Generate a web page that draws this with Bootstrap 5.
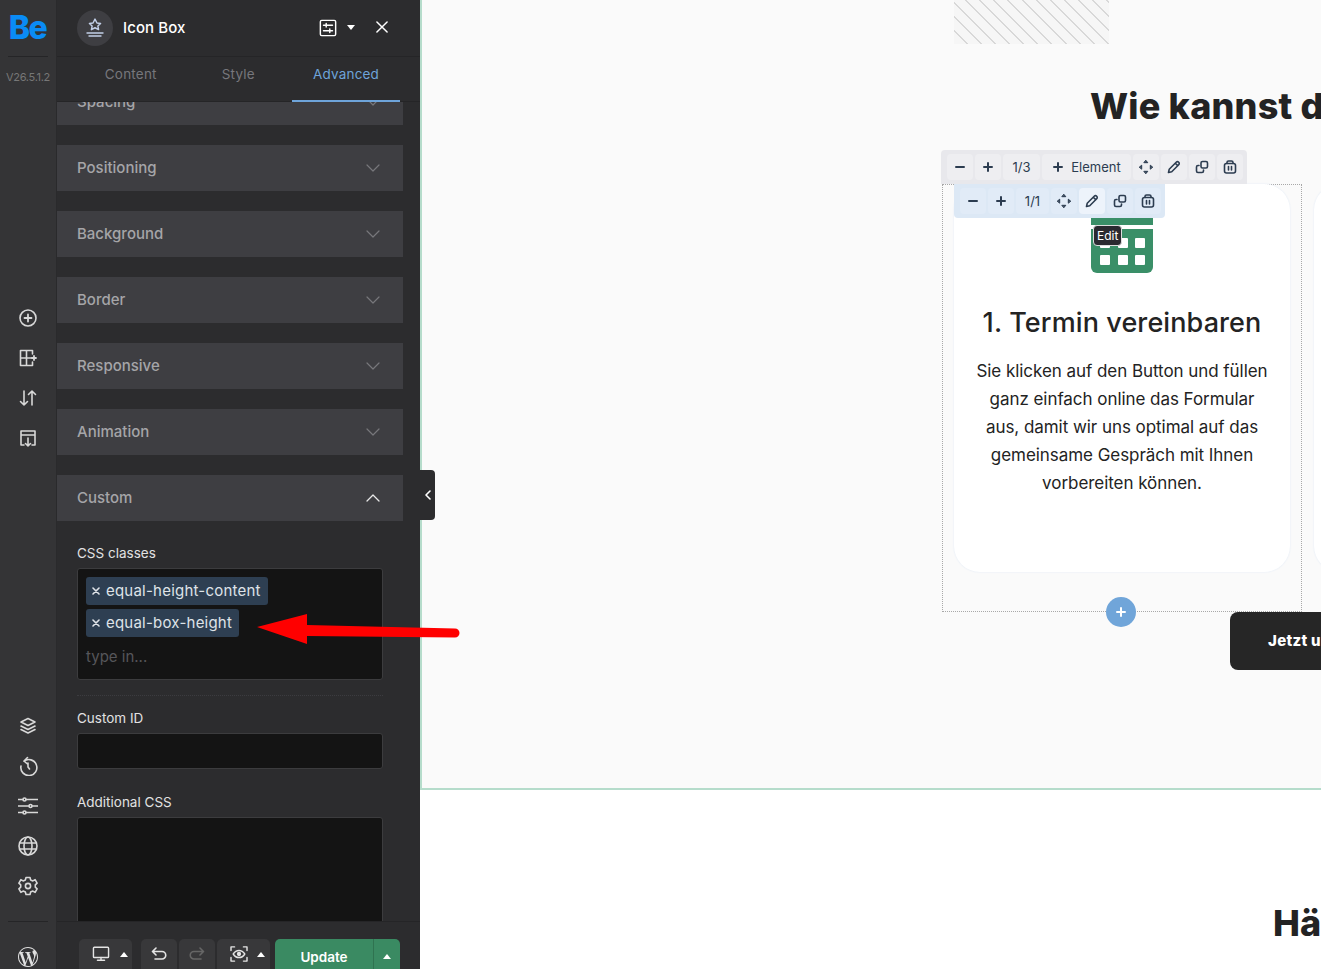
<!DOCTYPE html>
<html lang="de">
<head>
  <meta charset="UTF-8">
  <meta name="viewport" content="width=device-width, initial-scale=1">
  <title>Icon Box</title>
  <link href="https://cdn.jsdelivr.net/npm/bootstrap@5.3.3/dist/css/bootstrap.min.css" rel="stylesheet">
  <style>
    html, body { height: 100%; margin: 0; overflow: hidden; background: #fff; font-family: Inter, "Liberation Sans", sans-serif; }
    svg.ico { fill: none; stroke: currentColor; stroke-width: 1.6; stroke-linecap: round; stroke-linejoin: round; display: block; }

    .app-wrap { height: 969px; position: relative; }

    /* left rail */
    .rail { width: 57px; height: 969px; background: #343436; border-right: 1px solid #2a2a2c; color: #d8d8d8; overflow: hidden; }
    .rail-logo { height: 57px; width: 40px; margin: 0 auto; flex: none; border-bottom: 1px solid #252527; color: #0a8bf5; font-size: 32px; font-weight: 800; line-height: 55px; letter-spacing: -1.5px; text-align: center; text-indent: -1px; }
    .rail-ver { font-size: 11px; color: #777; line-height: 12px; margin-top: 14px; letter-spacing: -.3px; text-align: center; flex: none; }
    .rail-group { margin-top: 215px; flex: none; }
    .rail-group.lower { margin-top: 248px; border-bottom: 1px solid #252527; padding-bottom: 15px; width: 40px; align-self: center; }
    .rail-btn { height: 40px; display: flex; align-items: center; justify-content: center; }
    .rail-wp { height: 40px; margin-top: 15px; flex: none; display: flex; align-items: center; justify-content: center; color: #e0e0e0; }

    /* settings panel */
    .panel { width: 363px; height: 969px; background: #2c2c2e; color: #fff; }
    .panel-head { height: 57px; border-bottom: 1px solid #252527; padding-left: 20px; padding-right: 32px; padding-bottom: 1px; }
    .head-circle { width: 36px; height: 36px; border-radius: 50%; background: #3e3e42; color: #c2cfe8; }
    .head-title { font-size: 15px; font-weight: 500; margin: 1px 0 0 10px; letter-spacing: .1px; }
    .caret-up, .caret-down { width: 0; height: 0; border-left: 4px solid transparent; border-right: 4px solid transparent; }
    .caret-down { border-top: 5px solid #fff; margin-left: 10px; }
    .caret-up { border-bottom: 5px solid #fff; }
    .head-close { margin: 0 0 1px 21px; }
    .panel-tabs { height: 45px; padding-left: 20px; border-bottom: 1px solid #252527; position: relative; z-index: 2; background: #2c2c2e; }
    .tab-item { width: 107.5px; height: 44px; line-height: 35px; text-align: center; font-size: 13.5px; color: #77777c; letter-spacing: .2px; }
    .tab-item.on { width: 108px; color: #6ea4da; border-bottom: 2px solid #6ea4da; height: 45px; }
    .panel-scroll { height: 819px; overflow: hidden; padding-right: 17px; }
    .acc-row { height: 46px; background: #3e3e42; color: #a5a5a8; font-size: 15px; font-weight: 500; padding: 1px 23px 0 20px; margin-top: 20px; }
    .acc-row:first-child { margin-top: -23px; }
    .acc-row svg { color: #77777b; margin-bottom: 1px; }
    .acc-row svg.open { color: #e8e8e8; }
    .field-wrap { padding: 23px 20px 0 20px; }
    .field-label { font-size: 13.5px; line-height: 18px; color: #e2e2e2; margin-bottom: 6px; }
    .tag-box { height: 112px; background: #141414; border: 1px solid #3c3c3e; border-radius: 3px; padding: 8px; }
    .tag-chip { height: 28px; background: #2e3f52; border-radius: 3px; color: #dfe3e8; font-size: 15px; letter-spacing: .22px; padding: 0 7px 0 6px; margin-bottom: 4px; width: fit-content; white-space: nowrap; }
    .tag-chip svg { margin-right: 6px; }
    .tag-hint { font-size: 15px; color: #56565a; margin-top: 9px; }
    .field-sep { height: 16px; margin-bottom: 13px; border-bottom: 1px dotted #3c3c40; }
    .field-gap { height: 24px; }
    .field-input { height: 36px; background: #141414; border: 1px solid #3c3c3e; border-radius: 3px; }
    .field-area { height: 140px; background: #141414; border: 1px solid #3c3c3e; border-radius: 3px; }
    .panel-foot { height: 48px; border-top: 1px solid #252527; padding: 17px 20px 0 22px; overflow: hidden; }
    .foot-btn { height: 40px; background: #38383a; border-radius: 5px; color: #e4e4e4; padding-bottom: 10px; flex: none; }
    .foot-btn.pick { width: 53px; padding-left: 13px; gap: 10px; }
    .foot-btn.hist { width: 36px; margin-left: 2px; justify-content: center; }
    .foot-btn.first { margin-left: 9px; }
    .foot-btn.off { color: #666; }
    .foot-btn.view { margin-left: 2px; padding-left: 12px; gap: 8px; }
    .foot-update { width: 125px; height: 40px; background: #3a8a62; border-radius: 5px; color: #fff; font-size: 13.5px; font-weight: 600; margin-left: 5px; }
    .update-txt { width: 99px; padding-top: 8px; text-align: center; border-right: 1px solid #2f7350; }
    .update-more { width: 26px; padding-top: 15px; }

    .panel-toggle { position: absolute; left: 420px; top: 470px; width: 15px; height: 50px; background: #2c2c2e; border-radius: 0 4px 4px 0; color: #fff; z-index: 5; }
    .red-arrow { position: absolute; left: 250px; top: 605px; z-index: 6; }

    /* page preview */
    .preview { width: 901px; height: 969px; overflow: hidden; background: #fff; }
    .preview-top { height: 790px; background: #fafafa; border-left: 2px solid #b5dccb; border-bottom: 2px solid #b5dccb; padding-left: 520px; overflow: hidden; }
    .hatch-box { width: 155px; height: 44px; margin-left: 12px; background: repeating-linear-gradient(45deg, #f6f6f6 0 8.500px, #d8d8d8 8.500px 10px); }
    .sec-title { margin: 39px 0 0 148px; height: 46px; font-size: 36px; line-height: 46px; font-weight: 800; color: #232323; white-space: nowrap; letter-spacing: .2px; }
    .box-row { margin-top: 55px; gap: 12px; width: 600px; }
    .box-wrap { width: 360px; height: 428px; flex: none; border: 1px dotted #a8a8a8; padding: 0 11px; position: relative; }
    .box-card { height: 388px; margin-top: -1px; background: #fff; border-radius: 26px; box-shadow: 0 0 2px #dfe8f5; padding: 34px 24px 0; text-align: center; color: #232323; }
    .next-card { width: 100px; height: 388px; background: #fff; border-radius: 26px; box-shadow: 0 0 2px #dfe8f5; flex: none; }
    .cal-ico { width: 62px; height: 55px; margin: 0 auto; display: block; }
    .box-title { font-size: 27px; line-height: 36px; font-weight: 500; margin: 32px -10px 16px; white-space: nowrap; letter-spacing: .1px; }
    .box-text { font-size: 17px; line-height: 28px; margin: 0 -6px; letter-spacing: -.05px; white-space: nowrap; }
    .cta-btn { width: 200px; height: 58px; margin: 0 0 0 288px; background: #262626; border-radius: 8px; color: #fff; font-size: 15px; font-weight: 800; padding: 18px 0 0 38px; white-space: nowrap; letter-spacing: .3px; }
    .hae-title { margin: 110px 0 0 853px; font-size: 36px; line-height: 46px; font-weight: 800; color: #232323; white-space: nowrap; }

    .tools-bar { position: absolute; display: flex; gap: 2px; padding: 4px 4px 4px 6px; color: #2c3c50; z-index: 3; }
    .tools-bar.grey { left: -2px; top: -35px; width: 306px; height: 34px; background: #e8e8ec; border-radius: 4px 4px 0 0; }
    .tools-bar.blue { left: 11px; top: -1px; height: 34px; background: #dce8f5; border-radius: 0 0 4px 4px; }
    .tool-btn { width: 26px; height: 26px; flex: none; border-radius: 4px; display: flex; align-items: center; justify-content: center; font-size: 13px; line-height: 1; }
    .grey .tool-btn { background: #eeeef1; }
    .blue .tool-btn { background: #e1ebf7; }
    .blue .tool-btn.active { background: #edf3fb; }
    .tool-btn.wide { width: 37px; }
    .tool-btn.mid { width: 33px; }
    .tool-btn.elem { width: 89px; gap: 7px; }
    .edit-tip { position: absolute; left: 150px; top: 40px; background: #2a2a30; color: #fff; border: 1px solid #ddd; border-radius: 4px; font-size: 12px; padding: 2px 3px; line-height: 15px; z-index: 4; }
    .add-circle { position: absolute; left: 163px; bottom: -16px; width: 30px; height: 30px; background: #70a5d9; border-radius: 50%; color: #fff; z-index: 3; }
  </style>
</head>
<body>
<svg width="0" height="0" class="position-absolute">
  <symbol id="i-minus" viewBox="0 0 12 12"><path d="M2 6h8" stroke-width="2"/></symbol>
  <symbol id="i-plus" viewBox="0 0 12 12"><path d="M2 6h8M6 2v8" stroke-width="2"/></symbol>
  <symbol id="i-move" viewBox="0 0 16 16"><path d="M8 1.500l1.800 2.200H6.200zM8 14.500l1.800-2.200H6.200zM1.500 8l2.200-1.800v3.600zM14.500 8l-2.200-1.800v3.600z" fill="currentColor" stroke-width="1"/></symbol>
  <symbol id="i-pen" viewBox="0 0 16 16"><path d="M2.500 13.500l.7-3.200 7-7a1.700 1.700 0 0 1 2.500 2.500l-7 7zM9.300 4.200l2.500 2.500"/></symbol>
  <symbol id="i-copy" viewBox="0 0 16 16"><rect x="7" y="2.500" width="6.500" height="6.500" rx="1.500"/><path d="M5 6.500h-1A1.500 1.500 0 0 0 2.500 8v4A1.500 1.500 0 0 0 4 13.500h4A1.500 1.500 0 0 0 9.500 12v-1"/></symbol>
  <symbol id="i-trash" viewBox="0 0 16 16"><rect x="2.500" y="4.500" width="11" height="9.500" rx="2"/><path d="M5 4.500V3.500a1.500 1.500 0 0 1 1.500-1.500h3A1.500 1.500 0 0 1 11 3.500v1M6.500 7.500v3.500M9.500 7.500v3.500"/></symbol>
  <symbol id="i-chev-d" viewBox="0 0 14 8"><path d="M1 1l6 6 6-6" stroke-width="1.200"/></symbol>
  <symbol id="i-chev-u" viewBox="0 0 14 8"><path d="M1 7l6-6 6 6" stroke-width="1.300"/></symbol>
</svg>

<div class="app-wrap d-flex">
  <aside class="rail d-flex flex-column flex-shrink-0">
    <div class="rail-logo">Be</div>
    <div class="rail-ver">V26.5.1.2</div>
    <div class="rail-group">
      <div class="rail-btn"><svg class="ico" width="20" height="20" viewBox="0 0 20 20"><circle cx="10" cy="10" r="8"/><path d="M6.500 10h7M10 6.500v7" stroke-width="1.800"/></svg></div>
      <div class="rail-btn"><svg class="ico" width="20" height="20" viewBox="0 0 20 20"><path d="M14.500 6V2.500h-12v15h12V14M2.500 10h12M8.500 2.500v15"/><path d="M16 8v4M14 10h4" stroke-width="1.800"/></svg></div>
      <div class="rail-btn"><svg class="ico" width="20" height="20" viewBox="0 0 20 20"><path d="M6 3v14M2.500 13.500L6 17l3.500-3.500M14 17V3M10.500 6.500L14 3l3.500 3.500"/></svg></div>
      <div class="rail-btn"><svg class="ico" width="20" height="20" viewBox="0 0 20 20"><path d="M6 17H3V3h14v14h-3M3 7h14M10 10v8M7.500 15.500L10 18l2.500-2.500"/></svg></div>
    </div>
    <div class="rail-group lower">
      <div class="rail-btn"><svg class="ico" width="20" height="20" viewBox="0 0 20 20"><path d="M10 2.500l7 3.500-7 3.500L3 6zM3 10l7 3.500 7-3.500M3 13.500L10 17l7-3.500"/></svg></div>
      <div class="rail-btn"><svg class="ico" width="20" height="20" viewBox="0 0 20 20"><path d="M6 5.200A8 8 0 1 1 3 10M9.500 1.500L6 5l3.500 3M10 7v4l1.500 2"/></svg></div>
      <div class="rail-btn"><svg class="ico" width="20" height="20" viewBox="0 0 20 20"><path d="M0 3.500h5M8 3.500h12M0 10h11M14 10h6M0 16.500h5M8 16.500h12"/><circle cx="6.500" cy="3.500" r="1.500"/><circle cx="12.500" cy="10" r="1.500"/><circle cx="6.500" cy="16.500" r="1.500"/></svg></div>
      <div class="rail-btn"><svg class="ico" width="20" height="20" viewBox="0 0 20 20"><circle cx="10" cy="10" r="9"/><ellipse cx="10" cy="10" rx="4" ry="9"/><path d="M1.500 7h17M1.500 13h17"/></svg></div>
      <div class="rail-btn"><svg class="ico" width="20" height="20" viewBox="0 0 20 20"><path d="M8 1.500h4l.6 2.400 2.300 1 2.200-1.200 2 3.400-1.800 1.700v2.400l1.800 1.700-2 3.400-2.200-1.200-2.300 1-.6 2.400H8l-.6-2.400-2.300-1-2.200 1.200-2-3.400 1.800-1.700V8.800L.9 7.100l2-3.400 2.200 1.200 2.300-1z"/><circle cx="10" cy="10" r="2.600"/></svg></div>
    </div>
    <div class="rail-wp"><svg width="20" height="20" viewBox="0 0 24 24" fill="currentColor"><path d="M21.469 6.825c.84 1.537 1.318 3.3 1.318 5.175 0 3.979-2.156 7.456-5.363 9.325l3.295-9.527c.615-1.54.82-2.771.82-3.864 0-.405-.026-.78-.07-1.11m-7.981.105c.647-.03 1.232-.105 1.232-.105.582-.075.514-.93-.067-.899 0 0-1.755.135-2.88.135-1.064 0-2.85-.15-2.85-.15-.585-.03-.661.855-.075.885 0 0 .54.061 1.125.09l1.68 4.605-2.37 7.08L5.354 6.9c.649-.03 1.234-.1 1.234-.1.585-.075.516-.93-.065-.896 0 0-1.746.138-2.874.138-.2 0-.438-.008-.69-.015C4.911 3.15 8.235 1.215 12 1.215c2.809 0 5.365 1.072 7.286 2.833-.046-.003-.091-.009-.141-.009-1.06 0-1.812.923-1.812 1.914 0 .89.513 1.643 1.06 2.531.411.72.89 1.643.89 2.977 0 .915-.354 1.994-.821 3.479l-1.075 3.585-3.9-11.61.001.014zM12 22.784c-1.059 0-2.081-.153-3.048-.437l3.237-9.406 3.315 9.087c.024.053.05.101.078.149-1.12.393-2.325.609-3.582.609M1.211 12c0-1.564.336-3.05.935-4.39L7.29 21.709C3.694 19.96 1.212 16.271 1.211 12M12 0C5.385 0 0 5.385 0 12s5.385 12 12 12 12-5.385 12-12S18.615 0 12 0"/></svg></div>
  </aside>

  <section class="panel flex-shrink-0">
    <div class="panel-head d-flex align-items-center">
      <div class="head-circle d-flex align-items-center justify-content-center">
        <svg class="ico" width="20" height="22" viewBox="0 0 20 22" stroke-width="1.200"><path d="M10 2l2.200 4.300 4 .6-3 2.800.8 4-4-2.100-4 2.100.8-4-3-2.800 4-.6z" transform="translate(1 .3) scale(.9)"/><path d="M2 16h16M4 19h12" stroke-width="1.400"/></svg>
      </div>
      <div class="head-title">Icon Box</div>
      <div class="ms-auto d-flex align-items-center">
        <svg class="ico" width="18" height="18" viewBox="0 0 20 20" stroke-width="1.600"><rect x="1.500" y="1.500" width="17" height="17" rx="1.500"/><path d="M5 7h10M5 13h10M8 5v4M12 11v4"/></svg>
        <span class="caret-down"></span>
        <svg class="ico head-close" width="12" height="12" viewBox="0 0 13 13" stroke-width="2.400"><path d="M1 1l11 11M12 1L1 12"/></svg>
      </div>
    </div>
    <div class="panel-tabs d-flex">
      <div class="tab-item">Content</div>
      <div class="tab-item">Style</div>
      <div class="tab-item on">Advanced</div>
    </div>
    <div class="panel-scroll">
      <div class="acc-row d-flex align-items-center justify-content-between">Spacing <svg class="ico" width="14" height="8"><use href="#i-chev-d"/></svg></div>
      <div class="acc-row d-flex align-items-center justify-content-between">Positioning <svg class="ico" width="14" height="8"><use href="#i-chev-d"/></svg></div>
      <div class="acc-row d-flex align-items-center justify-content-between">Background <svg class="ico" width="14" height="8"><use href="#i-chev-d"/></svg></div>
      <div class="acc-row d-flex align-items-center justify-content-between">Border <svg class="ico" width="14" height="8"><use href="#i-chev-d"/></svg></div>
      <div class="acc-row d-flex align-items-center justify-content-between">Responsive <svg class="ico" width="14" height="8"><use href="#i-chev-d"/></svg></div>
      <div class="acc-row d-flex align-items-center justify-content-between">Animation <svg class="ico" width="14" height="8"><use href="#i-chev-d"/></svg></div>
      <div class="acc-row d-flex align-items-center justify-content-between">Custom <svg class="ico open" width="14" height="8"><use href="#i-chev-u"/></svg></div>
      <div class="field-wrap">
        <div class="field-label">CSS classes</div>
        <div class="tag-box">
          <div class="tag-chip d-flex align-items-center"><svg class="ico" width="8" height="8" viewBox="0 0 8 8" stroke-width="2.400"><path d="M1 1l6 6M7 1L1 7"/></svg>equal-height-content</div>
          <div class="tag-chip d-flex align-items-center"><svg class="ico" width="8" height="8" viewBox="0 0 8 8" stroke-width="2.400"><path d="M1 1l6 6M7 1L1 7"/></svg>equal-box-height</div>
          <div class="tag-hint">type in...</div>
        </div>
        <div class="field-sep"></div>
        <div class="field-label">Custom ID</div>
        <div class="field-input"></div>
        <div class="field-gap"></div>
        <div class="field-label">Additional CSS</div>
        <div class="field-area"></div>
      </div>
    </div>
    <div class="panel-foot d-flex">
      <div class="foot-btn pick d-flex align-items-center">
        <svg class="ico" width="18" height="16" viewBox="0 0 20 18" stroke-width="1.600"><rect x="1.500" y="1.500" width="17" height="11.500" rx="1"/><path d="M10 13v3M6 16h8"/></svg><span class="caret-up"></span>
      </div>
      <div class="foot-btn hist first d-flex align-items-center">
        <svg class="ico" width="16" height="14" viewBox="0 0 16 14" stroke-width="1.500"><path d="M5 1L1.500 4.500 5 8M2 4.500h9a3.500 3.500 0 0 1 0 7.500H4"/></svg>
      </div>
      <div class="foot-btn hist off d-flex align-items-center">
        <svg class="ico" width="16" height="14" viewBox="0 0 16 14" stroke-width="1.500"><path d="M11 1l3.500 3.500L11 8M14 4.500H5a3.500 3.500 0 0 0 0 7.500h7"/></svg>
      </div>
      <div class="foot-btn pick view d-flex align-items-center">
        <svg class="ico" width="20" height="16" viewBox="0 0 20 18" stroke-width="1.600"><path d="M1 5V1h4M15 1h4v4M19 13v4h-4M5 17H1v-4M3.500 9s2.500-4 6.500-4 6.500 4 6.500 4-2.500 4-6.500 4-6.500-4-6.500-4z"/><circle cx="10" cy="9" r="1.600" fill="currentColor"/></svg><span class="caret-up"></span>
      </div>
      <div class="foot-update d-flex">
        <div class="update-txt">Update</div>
        <div class="update-more d-flex justify-content-center"><span class="caret-up"></span></div>
      </div>
    </div>
  </section>

  <div class="panel-toggle d-flex align-items-center justify-content-center">
    <svg class="ico" width="6" height="10" viewBox="0 0 6 10" stroke-width="1.800"><path d="M5 1L1 5l4 4"/></svg>
  </div>
  <svg class="red-arrow" width="215" height="45" viewBox="0 0 215 45"><path d="M7 22L57 9v11l148 3.500a4.500 4.500 0 0 1 0 9L57 31v8z" fill="#f00"/></svg>

  <main class="preview flex-shrink-0">
    <div class="preview-top">
      <div class="hatch-box"></div>
      <div class="sec-title">Wie kannst du</div>
      <div class="box-row d-flex">
        <div class="box-wrap">
          <div class="tools-bar grey">
            <div class="tool-btn"><svg class="ico" width="12" height="12"><use href="#i-minus"/></svg></div>
            <div class="tool-btn"><svg class="ico" width="12" height="12"><use href="#i-plus"/></svg></div>
            <div class="tool-btn wide">1/3</div>
            <div class="tool-btn elem"><svg class="ico" width="12" height="12"><use href="#i-plus"/></svg>Element</div>
            <div class="tool-btn"><svg class="ico" width="16" height="16"><use href="#i-move"/></svg></div>
            <div class="tool-btn"><svg class="ico" width="16" height="16"><use href="#i-pen"/></svg></div>
            <div class="tool-btn"><svg class="ico" width="16" height="16"><use href="#i-copy"/></svg></div>
            <div class="tool-btn"><svg class="ico" width="16" height="16"><use href="#i-trash"/></svg></div>
          </div>
          <div class="tools-bar blue">
            <div class="tool-btn"><svg class="ico" width="12" height="12"><use href="#i-minus"/></svg></div>
            <div class="tool-btn"><svg class="ico" width="12" height="12"><use href="#i-plus"/></svg></div>
            <div class="tool-btn mid">1/1</div>
            <div class="tool-btn"><svg class="ico" width="16" height="16"><use href="#i-move"/></svg></div>
            <div class="tool-btn active"><svg class="ico" width="16" height="16"><use href="#i-pen"/></svg></div>
            <div class="tool-btn"><svg class="ico" width="16" height="16"><use href="#i-copy"/></svg></div>
            <div class="tool-btn"><svg class="ico" width="16" height="16"><use href="#i-trash"/></svg></div>
          </div>
          <div class="edit-tip">Edit</div>
          <div class="box-card">
            <svg class="cal-ico" viewBox="0 0 62 55"><path d="M0 0h62v7H0z" fill="#3a8f68"/><path d="M0 11h62v38a6 6 0 0 1-6 6H6a6 6 0 0 1-6-6z" fill="#3a8f68"/><g fill="#fff"><rect x="9" y="20" width="10" height="10" rx="1"/><rect x="27" y="20" width="10" height="10" rx="1"/><rect x="44" y="20" width="10" height="10" rx="1"/><rect x="9" y="37" width="10" height="10" rx="1"/><rect x="27" y="37" width="10" height="10" rx="1"/><rect x="44" y="37" width="10" height="10" rx="1"/></g></svg>
            <div class="box-title">1. Termin vereinbaren</div>
            <div class="box-text">Sie klicken auf den Button und füllen<br>ganz einfach online das Formular<br>aus, damit wir uns optimal auf das<br>gemeinsame Gespräch mit Ihnen<br>vorbereiten können.</div>
          </div>
          <div class="add-circle d-flex align-items-center justify-content-center"><svg class="ico" width="12" height="12"><use href="#i-plus"/></svg></div>
        </div>
        <div class="next-card"></div>
      </div>
      <div class="cta-btn">Jetzt unverbindlich</div>
    </div>
    <div class="hae-title">Häufige Fragen</div>
  </main>
</div>

<script src="https://cdn.jsdelivr.net/npm/bootstrap@5.3.3/dist/js/bootstrap.bundle.min.js"></script>
</body>
</html>
